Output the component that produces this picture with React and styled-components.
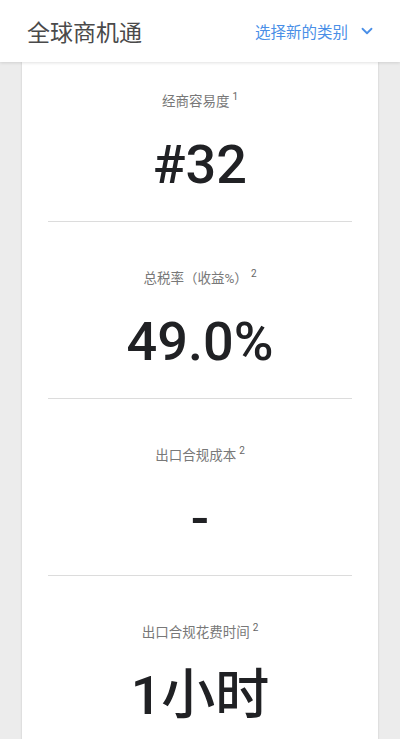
import React from 'react';
import styled, { createGlobalStyle } from 'styled-components';
import { ChevronDown } from 'lucide-react';

const GlobalStyle = createGlobalStyle`
  body {
    margin: 0;
    background-color: #ececec;
    font-family: Roboto, "Noto Sans CJK SC", sans-serif;
  }
`;

const Page = styled.div`
  min-height: 100vh;
  background-color: #ececec;
`;

const Header = styled.header`
  position: relative;
  z-index: 2;
  height: 62px;
  display: flex;
  align-items: center;
  justify-content: space-between;
  padding: 0 24px 0 27px;
  background-color: #ffffff;
  box-shadow: 0 1px 3px rgba(0, 0, 0, 0.12);
`;

const Title = styled.h1`
  margin: 0;
  font-size: 23px;
  font-weight: 400;
  color: #4a4a4a;
`;

const CategoryPicker = styled.button`
  display: flex;
  align-items: center;
  gap: 10px;
  border: none;
  background: none;
  padding: 0;
  font-family: inherit;
  font-size: 15.5px;
  color: #4a8fe7;
  cursor: pointer;
`;

const Card = styled.main`
  margin: 0 22px;
  background-color: #ffffff;
  box-shadow: 0 0 2px rgba(0, 0, 0, 0.18);
`;

const Section = styled.section`
  margin: 0 26px;
  padding: ${(p) => (p.first ? '31px 0 26px' : '48px 0 26px')};
  text-align: center;
  border-bottom: ${(p) => (p.last ? 'none' : '1px solid #dcdcdc')};
`;

const Label = styled.div`
  height: 16px;
  line-height: 16px;
  font-size: 13.5px;
  color: #787878;
`;

const Note = styled.sup`
  font-size: 10px;
  margin-left: 3px;
  vertical-align: 6px;
  line-height: 0;
  color: #666666;
`;

const Value = styled.div`
  margin-top: 26px;
  height: 60px;
  line-height: 60px;
  font-size: 54px;
  font-weight: 500;
  color: #202124;
`;

const stats = [
  { label: '经商容易度', note: 1, value: '#32' },
  { label: '总税率（收益%）', note: 2, value: '49.0%' },
  { label: '出口合规成本', note: 2, value: '-' },
  { label: '出口合规花费时间', note: 2, value: '1小时' },
];

const App = () => {
  return (
    <Page>
      <GlobalStyle />
      <Header>
        <Title>全球商机通</Title>
        <CategoryPicker>
          选择新的类别
          <ChevronDown size={18} strokeWidth={2.4} color="#4a8fe7" />
        </CategoryPicker>
      </Header>
      <Card>
        {stats.map((s, i) => (
          <Section key={s.label} first={i === 0} last={i === stats.length - 1}>
            <Label>
              {s.label}
              <Note>{s.note}</Note>
            </Label>
            <Value>{s.value}</Value>
          </Section>
        ))}
      </Card>
    </Page>
  );
};

export default App;
